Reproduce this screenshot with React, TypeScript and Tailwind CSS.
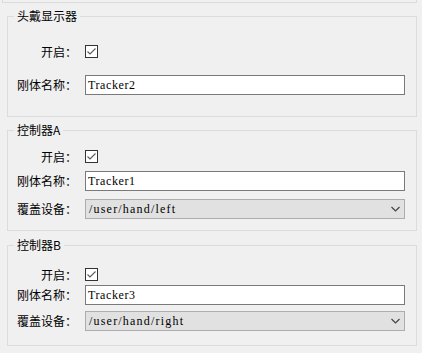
import React from "react";

const cjk = { fontFamily: '"Noto Sans CJK SC", "Microsoft YaHei", sans-serif' };
const serif = { fontFamily: '"Liberation Serif", "Times New Roman", serif' };

function Label({ children }: { children: React.ReactNode }) {
  return (
    <span className="w-[60px] shrink-0 text-right text-[12px] leading-[16px] text-black" style={cjk}>
      {children}
    </span>
  );
}

function CheckRow({ mt }: { mt: string }) {
  return (
    <div className={`flex items-center h-[13px] ${mt}`}>
      <Label>开启：</Label>
      <div className="ml-[8px] w-[13px] h-[13px] border border-[#333333] bg-white flex items-center justify-center">
        <svg width="11" height="11" viewBox="0 0 11 11">
          <path d="M1.5 5.5 L4 8 L9.5 2.5" fill="none" stroke="#5a5a5a" strokeWidth="1.1" />
        </svg>
      </div>
    </div>
  );
}

function InputRow({ mt, value }: { mt: string; value: string }) {
  return (
    <div className={`flex items-center h-[20px] ${mt}`}>
      <Label>刚体名称：</Label>
      <div className="ml-[8px] w-[320px] h-[20px] border border-[#7a7a7a] bg-white flex items-center pl-[2px]">
        <span className="text-[12px] tracking-[0.6px] text-black leading-[14px]" style={serif}>
          {value}
        </span>
      </div>
    </div>
  );
}

function SelectRow({ mt, value }: { mt: string; value: string }) {
  return (
    <div className={`flex items-center h-[20px] ${mt}`}>
      <Label>覆盖设备：</Label>
      <div className="ml-[8px] w-[320px] h-[20px] border border-[#adadad] bg-[#e1e1e1] flex items-center pl-[3px] pr-[4px]">
        <span className="flex-1 text-[12px] tracking-[1.2px] text-black leading-[14px]" style={serif}>
          {value}
        </span>
        <svg width="9" height="6" viewBox="0 0 9 6">
          <path d="M0.5 1 L4.5 5 L8.5 1" fill="none" stroke="#444444" strokeWidth="1.2" />
        </svg>
      </div>
    </div>
  );
}

function Group({ title, mt, children }: { title: string; mt: string; children: React.ReactNode }) {
  return (
    <div className={`relative ml-[7px] mr-[5px] h-[101px] border border-[#dcdcdc] pl-[9px] ${mt}`}>
      <span
        className="absolute left-[6px] -top-[9px] px-[3px] bg-[#f0f0f0] text-[12px] leading-[16px] text-black"
        style={cjk}
      >
        {title}
      </span>
      {children}
    </div>
  );
}

export default function App() {
  return (
    <div className="w-[422px] h-[353px] bg-[#f0f0f0] overflow-hidden">
      <div className="ml-[2px] mr-[5px] h-[3px] border-x border-b border-[#dcdcdc]" />
      <Group title="头戴显示器" mt="mt-[13px]">
        <CheckRow mt="mt-[28px]" />
        <InputRow mt="mt-[17px]" value="Tracker2" />
      </Group>
      <Group title="控制器A" mt="mt-[13px]">
        <CheckRow mt="mt-[19px]" />
        <InputRow mt="mt-[8px]" value="Tracker1" />
        <SelectRow mt="mt-[8px]" value="/user/hand/left" />
      </Group>
      <Group title="控制器B" mt="mt-[14px]">
        <CheckRow mt="mt-[22px]" />
        <InputRow mt="mt-[4px]" value="Tracker3" />
        <SelectRow mt="mt-[6px]" value="/user/hand/right" />
      </Group>
    </div>
  );
}
